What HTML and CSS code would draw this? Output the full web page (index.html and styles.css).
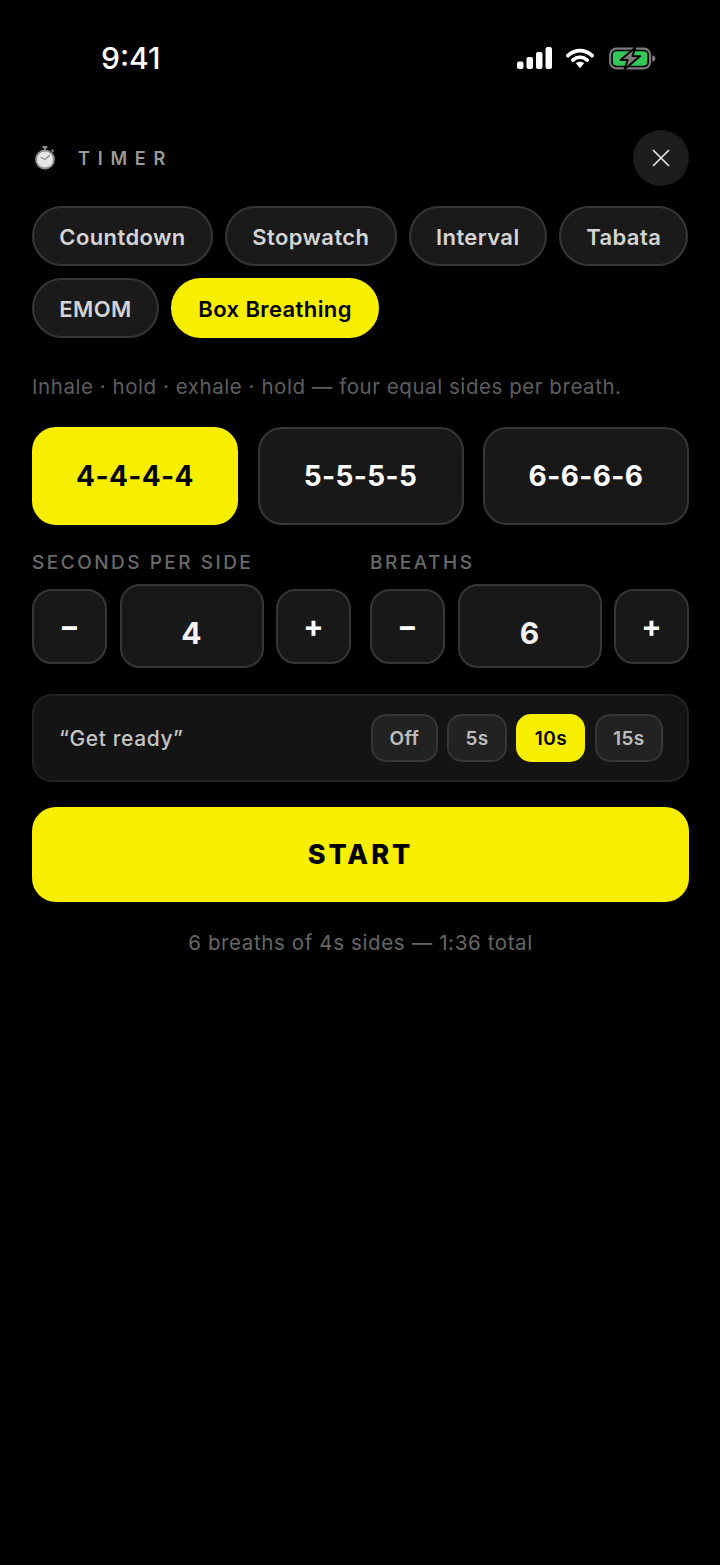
FILE: index.html
```html
<!DOCTYPE html>
<html lang="en">
<head>
  <meta charset="UTF-8" />
  <title>Timer</title>
  <meta name="viewport" content="width=device-width, initial-scale=1.0" />
  <link rel="stylesheet" href="styles.css">
</head>
<body>

  <div class="status-bar">
    <span class="clock">9:41</span>
    <div class="status-icons">
      <svg class="signal" width="35" height="22" viewBox="0 0 35 22">
        <rect x="0" y="14.5" width="6.5" height="7.5" rx="2" fill="#fff"/>
        <rect x="9.5" y="10" width="6.5" height="12" rx="2" fill="#fff"/>
        <rect x="19" y="5" width="6.5" height="17" rx="2" fill="#fff"/>
        <rect x="28.5" y="0" width="6.5" height="22" rx="2" fill="#fff"/>
      </svg>
      <svg class="wifi" width="28" height="21" viewBox="0 0 30 22.500">
        <path d="M2 8.2C9.5 1 20.5 1 28 8.2" fill="none" stroke="#fff" stroke-width="3.8" stroke-linecap="round"/>
        <path d="M7.2 13C11.8 8.8 18.200 8.8 22.8 13" fill="none" stroke="#fff" stroke-width="3.8" stroke-linecap="round"/>
        <path d="M10.6 16.4C13.2 14.2 16.8 14.2 19.4 16.4L15 21.6Z" fill="#fff"/>
      </svg>
      <svg class="battery" width="49" height="23" viewBox="0 0 49 24">
        <rect x="1.2" y="1.7" width="41.6" height="20.6" rx="6.5" fill="none" stroke="#7c7c7c" stroke-width="2.2"/>
        <rect x="4" y="4.5" width="36" height="15" rx="4" fill="#34c759"/>
        <path d="M45 8.5c2.2.5 3.400 2 3.400 3.500s-1.200 3-3.400 3.500Z" fill="#7c7c7c"/>
        <path d="M27.500 0.500 12 13.500h7.500L16 23.500l16.500-14h-8Z" fill="#7c7c7c" stroke="#000" stroke-width="2" stroke-linejoin="round"/>
      </svg>
    </div>
  </div>

  <main class="timer">
    <header class="timer-head">
      <div class="timer-title">
        <svg class="timer-emoji" width="22" height="24" viewBox="0 0 22 24">
          <rect x="8.500" y="0" width="5" height="2.500" rx="1" fill="#8e8e8e"/>
          <rect x="10" y="2" width="2" height="2.500" fill="#777"/>
          <rect x="17" y="3.500" width="3" height="2.500" rx="1" transform="rotate(40 18.500 4.700)" fill="#777"/>
          <circle cx="11" cy="13.500" r="10" fill="#8b8b8b"/>
          <circle cx="11" cy="13.500" r="8" fill="#e6e6e6"/>
          <path d="M11 13.500 15.500 9.500M11 13.500 7 11.500" stroke="#8a8a8a" stroke-width="1.200" stroke-linecap="round"/>
        </svg>
        <span>TIMER</span>
      </div>
      <button class="close-button" aria-label="Close">
        <svg width="18" height="18" viewBox="0 0 18 18">
          <path d="M1.500 1.500 16.500 16.500M16.500 1.500 1.500 16.500" stroke="#e4e4e4" stroke-width="1.700" stroke-linecap="round"/>
        </svg>
      </button>
    </header>

    <div class="chips">
      <button class="chip">Countdown</button>
      <button class="chip">Stopwatch</button>
      <button class="chip">Interval</button>
      <button class="chip">Tabata</button>
      <button class="chip">EMOM</button>
      <button class="chip active">Box Breathing</button>
    </div>

    <p class="hint">Inhale · hold · exhale · hold — four equal sides per breath.</p>

    <div class="presets">
      <button class="preset active">4-4-4-4</button>
      <button class="preset">5-5-5-5</button>
      <button class="preset">6-6-6-6</button>
    </div>

    <div class="steppers">
      <div class="stepper-group">
        <div class="stepper-label">SECONDS PER SIDE</div>
        <div class="stepper">
          <button class="step-button">−</button>
          <div class="step-value">4</div>
          <button class="step-button">+</button>
        </div>
      </div>
      <div class="stepper-group">
        <div class="stepper-label">BREATHS</div>
        <div class="stepper">
          <button class="step-button">−</button>
          <div class="step-value">6</div>
          <button class="step-button">+</button>
        </div>
      </div>
    </div>

    <div class="ready-card">
      <span class="ready-label">“Get ready”</span>
      <div class="ready-options">
        <button class="ready-option">Off</button>
        <button class="ready-option">5s</button>
        <button class="ready-option active">10s</button>
        <button class="ready-option">15s</button>
      </div>
    </div>

    <button class="start-button">START</button>

    <p class="summary">6 breaths of 4s sides — 1:36 total</p>
  </main>

</body>
</html>
```

FILE: styles.css
```css
* {
  box-sizing: border-box;
}

body {
  font-family: Inter, "Noto Sans", sans-serif;
  background-color: #000;
  margin: 0;
  height: 1565px;
  overflow: hidden;
  color: #fff;
}

button {
  font-family: inherit;
  margin: 0;
  padding: 0;
  cursor: pointer;
}

/* Status bar */
.status-bar {
  height: 130px;
  padding: 40px 63px 0 101px;
  display: flex;
  justify-content: space-between;
  align-items: flex-start;
}

.clock {
  font-size: 30px;
  font-weight: 550;
  line-height: 36px;
}

.status-icons {
  display: flex;
  align-items: center;
  gap: 14px;
  height: 36px;
}

/* Main panel */
.timer {
  padding: 0 31px 0 32px;
}

.timer-head {
  height: 56px;
  display: flex;
  justify-content: space-between;
  align-items: center;
}

.timer-title {
  display: flex;
  align-items: center;
  gap: 22px;
  color: #9a9a9a;
  font-size: 18px;
  font-weight: 600;
  letter-spacing: 7.800px;
}

.timer-emoji {
  margin-left: 2px;
}

.close-button {
  width: 56px;
  height: 56px;
  border: none;
  border-radius: 50%;
  background-color: #1c1c1c;
  display: flex;
  align-items: center;
  justify-content: center;
}

.chips {
  display: flex;
  flex-wrap: wrap;
  gap: 12px;
  margin-top: 20px;
}

.chip {
  height: 60px;
  padding: 2px 25.300px 0;
  background-color: #1a1a1a;
  border: 2px solid #363636;
  border-radius: 30px;
  color: #d4d4d4;
  font-size: 22px;
  font-weight: 600;
  letter-spacing: 0.400px;
}

.chip.active {
  background-color: #f8ef00;
  border-color: #f8ef00;
  color: #000;
}

.hint {
  margin: 36px 0 0;
  font-size: 20.500px;
  line-height: 26px;
  letter-spacing: 0.550px;
  color: #5e5e5e;
}

.presets {
  display: flex;
  gap: 19.500px;
  margin-top: 27px;
}

.preset {
  flex: 1;
  height: 98px;
  background-color: #181818;
  border: 2px solid #363636;
  border-radius: 24px;
  color: #fff;
  font-size: 28px;
  font-weight: 700;
  letter-spacing: 0.400px;
}

.preset.active {
  background-color: #f8ef00;
  border-color: #f8ef00;
  color: #000;
}

.steppers {
  display: flex;
  gap: 19px;
  margin-top: 27px;
}

.stepper-group {
  flex: 1;
}

.stepper-label {
  font-size: 19px;
  font-weight: 500;
  line-height: 22px;
  letter-spacing: 2.500px;
  color: #6a6a6a;
}

.stepper {
  display: flex;
  align-items: center;
  gap: 12.500px;
  margin-top: 10px;
}

.step-button {
  width: 75px;
  height: 75px;
  flex-shrink: 0;
  background-color: #181818;
  border: 2px solid #363636;
  border-radius: 20px;
  color: #fff;
  font-size: 30px;
  font-weight: 700;
}

.step-value {
  flex: 1;
  height: 84px;
  background-color: #181818;
  border: 2px solid #363636;
  border-radius: 20px;
  display: flex;
  align-items: center;
  justify-content: center;
  padding-top: 14px;
  font-size: 30px;
  font-weight: 700;
  color: #f2f2f2;
}

.ready-card {
  height: 88px;
  margin-top: 26px;
  padding: 0 24px 0 25px;
  background-color: #141414;
  border: 2px solid #222;
  border-radius: 20px;
  display: flex;
  align-items: center;
  justify-content: space-between;
}

.ready-label {
  font-size: 21px;
  font-weight: 500;
  letter-spacing: 0.600px;
  color: #c4c4c4;
}

.ready-options {
  display: flex;
  gap: 9.500px;
}

.ready-option {
  height: 48px;
  padding: 0 16.300px;
  background-color: #222;
  border: 2px solid #363636;
  border-radius: 15px;
  color: #bdbdbd;
  font-size: 19px;
  font-weight: 600;
  letter-spacing: 0.400px;
}

.ready-option.active {
  background-color: #f8ef00;
  border-color: #f8ef00;
  color: #000;
}

.start-button {
  display: block;
  width: 100%;
  height: 95px;
  margin-top: 25px;
  background-color: #f8ef00;
  border: none;
  border-radius: 24px;
  color: #000;
  font-size: 27px;
  font-weight: 800;
  letter-spacing: 3px;
}

.summary {
  margin: 28px 0 0;
  font-size: 20.500px;
  line-height: 26px;
  letter-spacing: 0.620px;
  text-align: center;
  color: #666;
}
```
